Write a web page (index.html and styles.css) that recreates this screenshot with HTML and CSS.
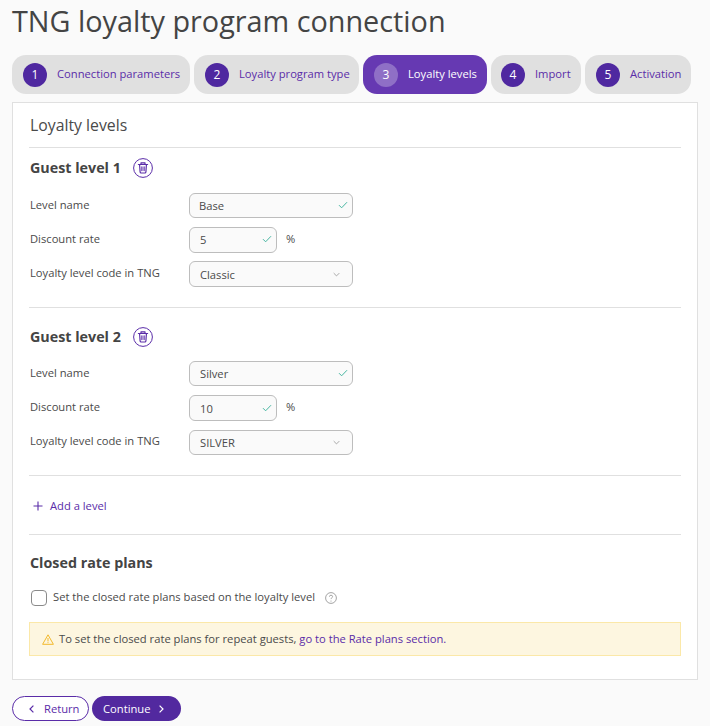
FILE: index.html
```html
<!DOCTYPE html>
<html lang="en">
<head>
<meta charset="utf-8">
<title>TNG loyalty program connection</title>
<link rel="stylesheet" href="styles.css">
</head>
<body>
<svg class="defs" width="0" height="0" aria-hidden="true">
  <symbol id="trash" viewBox="0 0 20 20"><circle cx="10" cy="10" r="9.4" fill="none" stroke="currentColor" stroke-width="1"/><path d="M5.4 6.5h9.2M8 6.3V4.8h4v1.5M6.6 6.7l.5 7.3q.1 1 1 1h3.8q.9 0 1-1l.5-7.3M8.9 8.8v3.8M11.1 8.8v3.8" fill="none" stroke="currentColor" stroke-width="1.2" stroke-linecap="round" stroke-linejoin="round"/></symbol>
  <symbol id="check" viewBox="0 0 12 10"><path d="M1 5.2l3.3 3.3L11 1.5" fill="none" stroke="currentColor" stroke-width="1.2"/></symbol>
  <symbol id="chev" viewBox="0 0 10 6"><path d="M1 1l4 4 4-4" fill="none" stroke="currentColor" stroke-width="1.2"/></symbol>
</svg>

<h1 class="title">TNG loyalty program connection</h1>

<nav class="steps">
  <a class="step s1"><span class="num">1</span><span class="step-text">Connection parameters</span></a>
  <a class="step s2"><span class="num">2</span><span class="step-text">Loyalty program type</span></a>
  <a class="step s3 active"><span class="num">3</span><span class="step-text">Loyalty levels</span></a>
  <a class="step s4"><span class="num">4</span><span class="step-text">Import</span></a>
  <a class="step s5"><span class="num">5</span><span class="step-text">Activation</span></a>
</nav>

<main class="panel">
  <h2 class="panel-title">Loyalty levels</h2>

  <section class="level">
    <h3 class="level-title">Guest level 1 <svg class="trash"><use href="#trash"/></svg></h3>
    <div class="fields">
      <label class="label">Level name</label>
      <div class="input wide name"><span>Base</span><svg class="check"><use href="#check"/></svg></div>
      <label class="label">Discount rate</label>
      <div class="rate"><div class="input narrow"><span>5</span><svg class="check"><use href="#check"/></svg></div><span class="pct">%</span></div>
      <label class="label">Loyalty level code in TNG</label>
      <div class="input wide select"><span>Classic</span><svg class="chev"><use href="#chev"/></svg></div>
    </div>
  </section>

  <section class="level second">
    <h3 class="level-title">Guest level 2 <svg class="trash"><use href="#trash"/></svg></h3>
    <div class="fields">
      <label class="label">Level name</label>
      <div class="input wide name"><span>Silver</span><svg class="check"><use href="#check"/></svg></div>
      <label class="label">Discount rate</label>
      <div class="rate"><div class="input narrow"><span>10</span><svg class="check"><use href="#check"/></svg></div><span class="pct">%</span></div>
      <label class="label">Loyalty level code in TNG</label>
      <div class="input wide select"><span>SILVER</span><svg class="chev"><use href="#chev"/></svg></div>
    </div>
  </section>

  <div class="add">
    <a class="add-link"><svg class="plus" viewBox="0 0 10 10"><path d="M5 .5v9M.5 5h9" fill="none" stroke="currentColor" stroke-width="1.1"/></svg>Add a level</a>
  </div>

  <section class="closed">
    <h3 class="closed-title">Closed rate plans</h3>
    <div class="check-row">
      <span class="box"></span>
      <span class="check-text">Set the closed rate plans based on the loyalty level</span>
      <svg class="help" viewBox="0 0 12 12"><circle cx="6" cy="6" r="5.4" fill="none" stroke="currentColor" stroke-width=".9"/><path d="M4.4 4.7q.1-1.5 1.6-1.5t1.6 1.4q0 .8-.9 1.3-.7.4-.7 1.2" fill="none" stroke="currentColor" stroke-width=".9"/><circle cx="6" cy="9" r=".6" fill="currentColor"/></svg>
    </div>
    <div class="alert">
      <svg class="warn" viewBox="0 0 12 11"><path d="M6 .8L11.4 10.3H.6z" fill="none" stroke="currentColor" stroke-width="1" stroke-linejoin="round"/><path d="M6 4v3.4M6 8.2v.9" fill="none" stroke="currentColor" stroke-width="1"/></svg>
      <span>To set the closed rate plans for repeat guests, <a class="link">go to the Rate plans section.</a></span>
    </div>
  </section>
</main>

<footer class="actions">
  <a class="btn ghost"><svg class="arrow" viewBox="0 0 5 8"><path d="M4.4.6L1 4l3.4 3.4" fill="none" stroke="currentColor" stroke-width="1.2"/></svg>Return</a>
  <a class="btn solid">Continue<svg class="arrow" viewBox="0 0 5 8"><path d="M.6.6L4 4 .6 7.4" fill="none" stroke="currentColor" stroke-width="1.2"/></svg></a>
</footer>
</body>
</html>
```

FILE: styles.css
```css
* { box-sizing: border-box; }
html, body { margin: 0; }
body {
  width: 710px;
  height: 726px;
  padding: 0 12px;
  overflow: hidden;
  background: #fafafa;
  color: #4a4a4a;
  font: 11.2px/16px "Open Sans", "Noto Sans", sans-serif;
}
.defs { position: absolute; }
.title {
  margin: 0;
  padding-top: 2px;
  height: 55px;
  font-size: 28.8px;
  line-height: 38px;
  font-weight: 400;
  color: #444;
}
.steps { display: flex; gap: 4px; height: 39px; }
.step {
  display: flex;
  align-items: center;
  height: 39px;
  padding-left: 11px;
  border-radius: 14px;
  background: #e0e0e0;
  color: #5a2ca8;
  white-space: nowrap;
}
.step-text { margin-bottom: 1px; }
.s1 { width: 178px; }
.s2 { width: 165px; }
.s3 { width: 124px; }
.s4 { width: 90px; padding-left: 10px; }
.s5 { width: 106px; }
.step.active { background: #6639b2; color: #fff; }
.num {
  display: flex;
  align-items: center;
  justify-content: center;
  width: 24px;
  height: 24px;
  margin-right: 10px;
  border-radius: 50%;
  background: #4f28a0;
  color: #fff;
  font-size: 12px;
}
.active .num { background: #8f6fc6; }
.panel {
  height: 578px;
  margin-top: 8px;
  padding: 0 16px;
  background: #fff;
  border: 1px solid #e0e0e0;
}
.panel-title {
  margin: 0;
  height: 45px;
  padding: 11px 0 0 1px;
  font-size: 15.8px;
  line-height: 22px;
  font-weight: 400;
  color: #4a4a4a;
  border-bottom: 1px solid #e0e0e0;
}
.level { height: 160px; padding: 10px 0 0 1px; border-bottom: 1px solid #e0e0e0; }
.level.second { height: 168px; padding-top: 19px; }
.level-title, .closed-title {
  display: flex;
  align-items: center;
  margin: 0;
  font-size: 14.3px;
  line-height: 20px;
  font-weight: 700;
  color: #444;
}
.trash { width: 20px; height: 20px; margin-left: 12px; color: #5a2ca8; }
.fields {
  display: grid;
  grid-template-columns: 159px 1fr;
  grid-auto-rows: 25.4px;
  row-gap: 8.8px;
  align-items: center;
  margin-top: 15px;
}
.second .fields { row-gap: 9px; margin-top: 14px; }
.label { padding-bottom: 2px; }
.input {
  display: flex;
  align-items: center;
  justify-content: space-between;
  height: 25.4px;
  padding: 0 4px 0 10px;
  background: #fafafa;
  border: 1px solid #bdbdbd;
  border-radius: 6px;
}
.wide { width: 164px; }
.narrow { width: 88px; }
.name { padding-left: 9px; }
.second .name { padding-left: 10px; padding-top: 1px; }
.select { padding-right: 9px; padding-top: 2px; }
.second .narrow { padding-top: 1px; }
.check { width: 10px; height: 8px; margin-bottom: 2px; color: #3fb39d; }
.chev { width: 7px; height: 5px; margin: 0 3px 2px 0; color: #9a9a9a; }
.rate { display: flex; align-items: center; }
.pct { margin-left: 9px; padding-bottom: 2px; }
.add { height: 59px; padding: 22px 0 0 4px; border-bottom: 1px solid #e0e0e0; }
.add-link { display: flex; align-items: center; color: #5a2ca8; }
.plus { width: 10px; height: 10px; margin-right: 7px; }
.closed { padding-top: 18px; }
.closed-title { padding-left: 1px; }
.check-row { display: flex; align-items: center; margin: 16px 0 0 2px; height: 18px; }
.check-text { padding-bottom: 2px; }
.box {
  width: 16px;
  height: 16px;
  margin-right: 6px;
  border: 1px solid #8a8a8a;
  border-radius: 4px;
  background: #fff;
}
.help { width: 12px; height: 12px; margin-left: 10px; color: #9a9a9a; }
.alert {
  display: flex;
  align-items: center;
  height: 34px;
  margin-top: 15px;
  padding: 0 12px;
  background: #fdf6e0;
  border: 1px solid #fbe8a8;
}
.warn { width: 12px; height: 11px; margin-right: 5px; color: #f2b92c; }
.link { color: #5a2ca8; }
.actions { display: flex; gap: 3px; margin-top: 16px; }
.btn {
  display: flex;
  align-items: center;
  height: 25px;
  border-radius: 13px;
}
.btn.ghost { width: 77px; padding-left: 16px; background: #fff; color: #5a2ca8; border: 1px solid #5a2ca8; }
.btn.ghost .arrow { margin-right: 10px; }
.btn.solid { width: 89px; padding-left: 11px; background: #52299f; color: #fff; }
.btn.solid .arrow { margin-left: 9px; }
.arrow { width: 5px; height: 8px; }
```
